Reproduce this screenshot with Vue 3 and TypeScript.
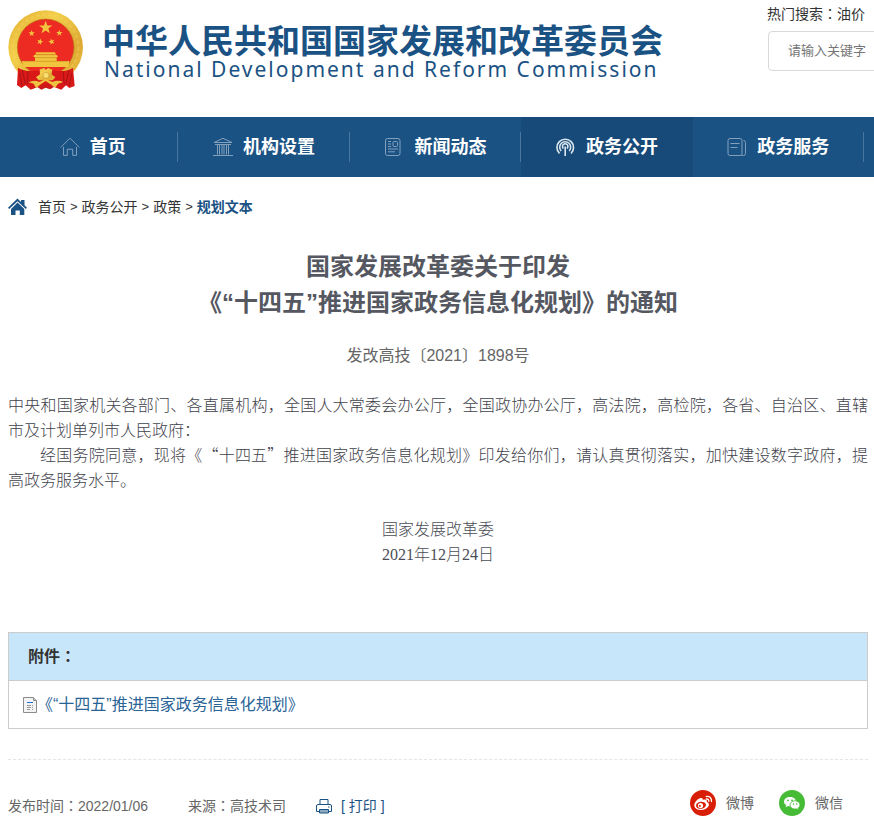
<script setup lang="ts">
import { ref } from 'vue'

interface NavItem {
  label: string
  icon: 'home' | 'bank' | 'news' | 'signal' | 'docs'
  active?: boolean
}

const navItems: NavItem[] = [
  { label: '首页', icon: 'home' },
  { label: '机构设置', icon: 'bank' },
  { label: '新闻动态', icon: 'news' },
  { label: '政务公开', icon: 'signal', active: true },
  { label: '政务服务', icon: 'docs' },
]

const crumbs: string[] = ['首页', '政务公开', '政策']
const keyword = ref('')
const star = '0,-10 2.4,-3.2 9.5,-3.1 3.8,1.2 5.9,8.1 0,4 -5.9,8.1 -3.8,1.2 -9.5,-3.1 -2.4,-3.2'

function printPage(): void {
  window.print()
}
</script>

<template>
  <div class="page">
    <header class="header">
      <a class="brand" href="#">
        <svg class="emblem" viewBox="24 30 225 243" aria-hidden="true">
          <defs>
            <linearGradient id="gold" x1="0" y1="0" x2="1" y2="1">
              <stop offset="0" stop-color="#e2ae35" />
              <stop offset=".35" stop-color="#f3cf4c" />
              <stop offset=".7" stop-color="#dda932" />
              <stop offset="1" stop-color="#f0c644" />
            </linearGradient>
          </defs>
          <ellipse cx="137" cy="142" rx="112" ry="111" fill="url(#gold)" />
          <circle cx="137" cy="142" r="98" fill="none" stroke="#f7db62" stroke-width="7" stroke-dasharray="11 7" opacity=".3" />
          <circle cx="137" cy="142" r="85" fill="#ee2b23" stroke="#b67716" stroke-width="2" />
          <g fill="#f2c53e">
            <polygon :points="star" transform="translate(137 83) scale(2.1)" />
            <polygon :points="star" transform="translate(95 100)" />
            <polygon :points="star" transform="translate(178 99)" />
            <polygon :points="star" transform="translate(120 125) rotate(15)" />
            <polygon :points="star" transform="translate(155 125) rotate(-15)" />
            <path d="M108 157H165L168 164H106ZM102 165H171L174 171H100ZM105 171H170V183H105ZM66 183H208L205 201H69Z" />
          </g>
          <path d="M108 164H166M104 173H170M70 184H204" stroke="#bd7c1c" stroke-width="1.5" />
          <path d="M54 203Q78 218 119 211L137 224L156 211Q199 218 219 203L224 258L208 264L198 256L184 269L162 261L137 256L112 262L92 269L77 256L64 264L51 255Z" fill="#d91818" />
          <path d="M67 210L76 253M84 214L82 250M59 220L66 258M207 210L197 253M190 214L192 250M215 220L208 258" stroke="#a81316" stroke-width="3" fill="none" />
          <path d="M119 208L133 204L137 210L144 204L157 209L155 223L166 232L158 241L116 241L108 232L120 223Z" fill="url(#gold)" />
          <circle cx="138" cy="226" r="9" fill="#f7df70" stroke="#d19a30" stroke-width="2" />
          <path d="M86 247Q102 238 118 246L137 237L157 246Q172 238 190 246L174 251L166 263L151 252L137 243L123 252L108 264L101 251Z" fill="#efc342" />
          <path d="M113 262Q137 244 161 262L150 268L137 263L124 269Z" fill="#cb1717" />
        </svg>
        <span class="brand-text">
          <span class="brand-cn">中华人民共和国国家发展和改革委员会</span>
          <span class="brand-en">National Development and Reform Commission</span>
        </span>
      </a>
      <div class="search">
        <div class="hot">热门搜索<span class="colon">：</span><a href="#">油价</a></div>
        <input v-model="keyword" class="search-input" type="text" placeholder="请输入关键字" aria-label="请输入关键字" />
      </div>
    </header>

    <nav class="nav">
      <a v-for="item in navItems" :key="item.label" href="#" class="nav-item" :class="{ active: item.active }">
        <svg class="nav-icon" viewBox="0 0 20 20" aria-hidden="true">
          <path v-if="item.icon === 'home'" d="M.7 10.5 10 1.2l9.3 9.3M3.5 10v8.4h3.8v-6.2h5.4v6.2h3.8V10" />
          <path v-else-if="item.icon === 'bank'" d="M10 1.3 1 5.5h18ZM2 7.5h16M4.5 7.5v10M6.5 7.5v10M9 7.5v10M11 7.5v10M13.5 7.5v10M15.5 7.5v10M0 18.5h20" />
          <g v-else-if="item.icon === 'news'">
            <rect x=".5" y="1.5" width="14.5" height="17" rx="2" />
            <rect x="8" y="4.5" width="4.5" height="5" rx="1" />
            <path d="M3 4.5h3M3 7h3M3 9.5h3M3 12h10M3 14.8h7" />
          </g>
          <g v-else-if="item.icon === 'signal'" stroke-width="1.6">
            <path d="M3.500 16.500a8.300 8.300 0 1 1 11.500 0M5.200 14a5.500 5.500 0 1 1 8 0M7.500 11.500a2.700 2.700 0 1 1 3.400 0M9.200 9.500V19" />
          </g>
          <g v-else>
            <rect x="1" y="1.5" width="14" height="17" rx="2" />
            <path d="M3.5 6.5h9M3.5 10.5h7M16.5 3.5q2 0 2 2v11q0 2-2 2h-2" />
          </g>
        </svg>
        <span>{{ item.label }}</span>
      </a>
    </nav>

    <main class="content">
      <div class="crumbs">
        <svg class="crumb-home" viewBox="0 0 20 18" aria-hidden="true">
          <path d="M9.5 .5 13 4V2h3.5v5.3l2.500 2.400-1.200 1.300-8.300-7.800L1.200 11 0 9.700Z" />
          <path d="m9.5 4.5 6.8 6.5V17h-4.500v-4.500H7.500V17H3v-6Z" />
        </svg>
        <template v-for="crumb in crumbs" :key="crumb"><a href="#">{{ crumb }}</a><span class="sep">&gt;</span></template>
        <strong>规划文本</strong>
      </div>

      <article>
        <h1>国家发展改革委关于印发<br />《“十四五”推进国家政务信息化规划》的通知</h1>
        <p class="doc-no">发改高技〔2021〕1898号</p>
        <div class="body">
          <p>中央和国家机关各部门、各直属机构，全国人大常委会办公厅，全国政协办公厅，高法院，高检院，各省、自治区、直辖市及计划单列市人民政府：</p>
          <p class="indent">经国务院同意，现将《“十四五”推进国家政务信息化规划》印发给你们，请认真贯彻落实，加快建设数字政府，提高政务服务水平。</p>
        </div>
        <div class="signature">
          <div>国家发展改革委<br />2021年12月24日</div>
        </div>
      </article>

      <section class="attachments">
        <h2>附件<span class="colon">：</span></h2>
        <div class="attachment">
          <svg class="file-icon" viewBox="0 0 14 16" aria-hidden="true">
            <path d="M.5.5h10l3 3v12H.5Z" fill="#f3f3f3" stroke="#8c8c8c" />
            <path d="M10.5.5v3h3" fill="#ccc" stroke="#8c8c8c" />
            <path d="M4 5.5h6" stroke="#1c70d5" />
            <path d="M4 8.5h4M9 8.5h1M4 10.5h4M9 10.5h1M4 12.5h3M9 12.5h1" stroke="#999" />
          </svg>
          <a href="#">《“十四五”推进国家政务信息化规划》</a>
        </div>
      </section>

      <footer class="meta">
        <div class="meta-info">
          <span>发布时间<span class="colon">：</span>2022/01/06</span>
          <span class="source">来源<span class="colon">：</span>高技术司</span>
          <button class="print" type="button" @click="printPage">
            <svg viewBox="0 0 16 16" aria-hidden="true">
              <path d="M4 6.5V1.5h8v5M3.500 13.500h-3V8Q.5 6.500 2 6.500h12q1.500 0 1.500 1.500v5.500h-3" />
              <path d="M3.5 11.500h9v3.500h-9Z" fill="#8fa9c1" />
              <path d="M12 9h1.500" />
            </svg>
            <span>[ 打印 ]</span>
          </button>
        </div>
        <div class="share">
          <a href="#">
            <svg viewBox="0 0 26 26" aria-hidden="true">
              <circle cx="13" cy="13" r="13" fill="#d81e06" />
              <path d="M10.500 8C12 7.600 13.200 8.300 12.700 10C14.500 9.200 17.500 9.500 16.800 12C19 12.600 19.500 14.500 18.500 16.200C17 18.800 13.500 20.200 10 19.900C6.500 19.600 4 17.700 4.300 15C4.600 12 7.500 8.800 10.500 8Z" fill="#fff" />
              <ellipse cx="11" cy="15.300" rx="5" ry="3.500" fill="#d81e06" transform="rotate(-8 11 15.300)" />
              <circle cx="10.500" cy="15.500" r="2.600" fill="#fff" />
              <circle cx="9.900" cy="16" r="1" fill="#d81e06" />
              <path d="M16.300 6.500Q21.700 6 21.500 11.500M16.300 9Q18.900 8.800 18.800 11.300" fill="none" stroke="#fff" stroke-width="1.300" stroke-linecap="round" />
            </svg>
            <span>微博</span>
          </a>
          <a href="#">
            <svg viewBox="0 0 26 26" aria-hidden="true">
              <circle cx="13" cy="13" r="13" fill="#46bb36" />
              <path d="M11 7C7.600 7 5 9 5 11.800Q5 14 7.200 15.300L6.600 17.300L9 16Q10.500 16.400 11.800 16C15 15.800 17 14 17 11.700C17 9 14.400 7 11 7Z" fill="#fff" />
              <path d="M16 10.800C13.200 10.800 11 12.700 11 15C11 17.300 13.200 19 16 19L17.500 18.800L19.500 20L19 18.200Q21 17 21 15C21 12.700 18.800 10.800 16 10.800Z" fill="#fff" stroke="#46bb36" stroke-width=".8" />
              <g fill="#46bb36"><circle cx="9" cy="10.300" r=".9" /><circle cx="13" cy="10.300" r=".9" /><circle cx="14.500" cy="14" r=".8" /><circle cx="17.800" cy="14" r=".8" /></g>
            </svg>
            <span>微信</span>
          </a>
        </div>
      </footer>
    </main>
  </div>
</template>

<style>
body {
  margin: 0;
  background: #fff;
}
</style>

<style scoped>
* {
  box-sizing: border-box;
}
.page {
  overflow: hidden;
  color: #333;
  font-family: "Liberation Sans", "Noto Sans CJK SC", sans-serif;
  font-size: 14px;
  line-height: 20px;
}
a {
  color: inherit;
  text-decoration: none;
}
h1, h2, p {
  margin: 0;
}
/* The Japanese face centres the full-width colon in its cell. */
.colon {
  font-family: "Noto Sans CJK JP", sans-serif;
  line-height: 1;
}
.header {
  display: flex;
  align-items: flex-start;
  justify-content: space-between;
  padding: 0 0 26px 8px;
}
.brand {
  display: flex;
  gap: 19px;
  padding-top: 10px;
  color: #1b5284;
}
.emblem {
  width: 75px;
  height: 81px;
}
.brand-text {
  display: flex;
  flex-direction: column;
  padding-top: 15px;
  white-space: nowrap;
}
.brand-cn {
  font-size: 33px;
  font-weight: 700;
  line-height: 33px;
}
.brand-en {
  padding-left: 2px;
  font-family: "Noto Sans", sans-serif;
  font-size: 21px;
  line-height: 22px;
  letter-spacing: 2px;
}
.search {
  width: 107px;
  padding-top: 4px;
  white-space: nowrap;
}
.hot {
  margin-bottom: 7px;
}
.search-input {
  width: 220px;
  height: 40px;
  margin-left: 1px;
  padding: 0 19px 2px;
  border: 1px solid #d9d9d9;
  border-radius: 4px;
  outline: none;
  color: #333;
  font: inherit;
  font-size: 13px;
}
.search-input::placeholder {
  color: #757575;
}
.nav {
  display: flex;
  height: 60px;
  padding: 0 10px 0 7px;
  background: #1b5284;
}
.nav-item {
  position: relative;
  display: flex;
  flex: 1;
  align-items: center;
  justify-content: center;
  gap: 10px;
  color: #fff;
  font-size: 18px;
  font-weight: 700;
}
.nav-item::after {
  position: absolute;
  top: 15px;
  right: 0;
  width: 1px;
  height: 30px;
  background: #4a759d;
  content: "";
}
.nav-item.active {
  background: #174a78;
}
.nav-item.active::after {
  display: none;
}
.nav-icon {
  width: 20px;
  height: 20px;
  fill: none;
  stroke: #82a0bc;
  stroke-width: 1;
}
.active .nav-icon {
  stroke: #dce6ee;
}
.content {
  padding: 20px 6px 0 8px;
}
.crumbs {
  display: flex;
  align-items: center;
  gap: 4px;
}
.crumb-home {
  width: 20px;
  height: 18px;
  margin-right: 6px;
  fill: #1b5284;
}
.crumbs strong {
  color: #1b5284;
}
.sep {
  font-size: 13px;
}
h1 {
  margin-top: 32px;
  color: #555861;
  font-size: 24px;
  line-height: 36px;
  text-align: center;
}
.doc-no {
  margin-top: 23px;
  color: #666;
  font-size: 16px;
  line-height: 24px;
  text-align: center;
}
.body {
  margin-top: 24px;
  color: #3f424b;
  font-family: "Noto Sans CJK SC", sans-serif;
  font-size: 16px;
  font-weight: 300;
  line-height: 25px;
  text-align: justify;
  text-spacing-trim: space-all;
}
.indent {
  text-indent: 2em;
}
.signature {
  display: flex;
  justify-content: center;
  margin-top: 25px;
  color: #4a4d56;
  font-family: "Liberation Serif", "Noto Sans CJK SC", serif;
  font-size: 16px;
  font-weight: 300;
  line-height: 25px;
}
.attachments {
  margin-top: 65px;
  border: 1px solid #ccc;
}
.attachments h2 {
  padding: 12px 19px;
  border-bottom: 1px solid #ccc;
  background: #c7e6fa;
  font-size: 16px;
  line-height: 23px;
}
.attachment {
  display: flex;
  align-items: center;
  height: 47px;
  padding-left: 14px;
  color: #2a6496;
  font-size: 16px;
}
.file-icon {
  width: 14px;
  height: 16px;
}
.meta {
  display: flex;
  align-items: flex-start;
  justify-content: space-between;
  margin-top: 30px;
  padding: 30px 25px 8px 0;
  border-top: 1px dashed #e5e5e5;
  color: #666;
}
.meta-info {
  display: flex;
  align-items: center;
  padding-top: 6px;
}
.source {
  margin-left: 40px;
}
.print {
  display: flex;
  align-items: center;
  gap: 9px;
  margin-left: 30px;
  padding: 0;
  border: 0;
  background: none;
  color: #1b5284;
  font: inherit;
  cursor: pointer;
}
.print svg {
  width: 16px;
  height: 16px;
  fill: none;
  stroke: #1b5284;
}
.share {
  display: flex;
  gap: 25px;
}
.share a {
  display: flex;
  align-items: center;
  gap: 10px;
}
.share svg {
  width: 26px;
  height: 26px;
}
</style>
